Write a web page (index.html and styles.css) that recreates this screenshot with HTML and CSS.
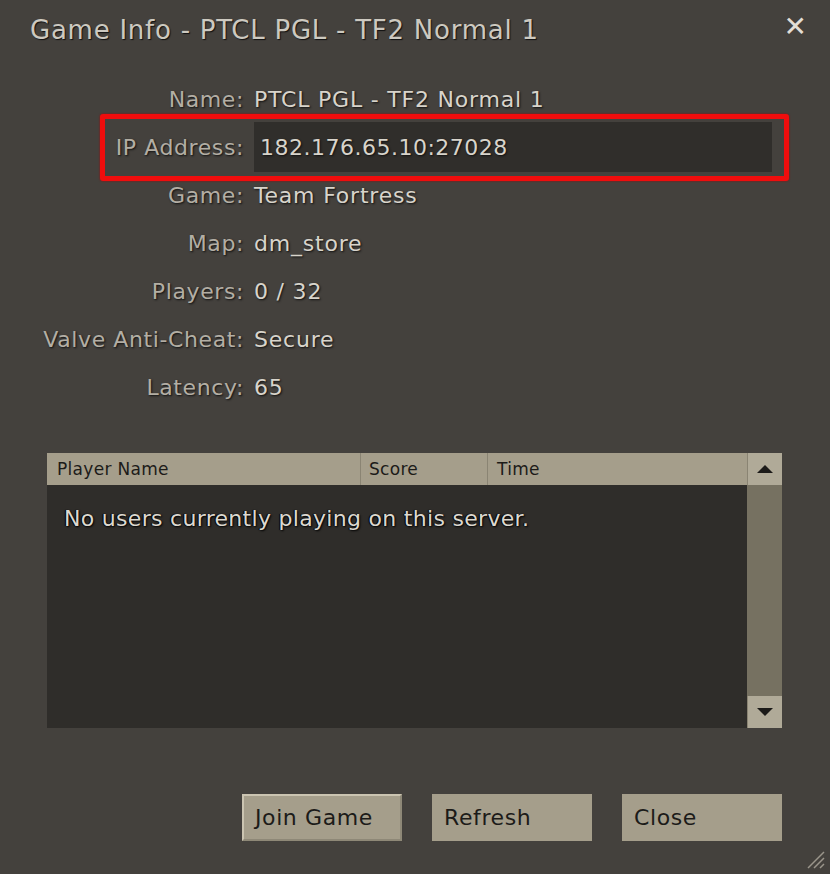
FILE: index.html
```html
<!DOCTYPE html>
<html lang="en">
<head>
    <meta charset="UTF-8">
    <title>Game Info - PTCL PGL - TF2 Normal 1</title>
    <link rel="stylesheet" href="styles.css">
</head>
<body>
    <div class="window">
        <div class="titlebar">
            <span class="title">Game Info - PTCL PGL - TF2 Normal 1</span>
            <span class="close-x">&#x2715;</span>
        </div>

        <div class="info">
            <div class="row"><span class="lbl">Name:</span><span class="val">PTCL PGL - TF2 Normal 1</span></div>
            <div class="row row-ip">
                <span class="lbl">IP Address:</span>
                <span class="field">182.176.65.10:27028</span>
                <span class="mark"></span>
            </div>
            <div class="row"><span class="lbl">Game:</span><span class="val">Team Fortress</span></div>
            <div class="row"><span class="lbl">Map:</span><span class="val">dm_store</span></div>
            <div class="row"><span class="lbl">Players:</span><span class="val">0 / 32</span></div>
            <div class="row"><span class="lbl">Valve Anti-Cheat:</span><span class="val">Secure</span></div>
            <div class="row"><span class="lbl">Latency:</span><span class="val">65</span></div>
        </div>

        <div class="players">
            <div class="list">
                <div class="head">
                    <div class="col c-name">Player Name</div>
                    <div class="col c-score">Score</div>
                    <div class="col c-time">Time</div>
                </div>
                <div class="body">No users currently playing on this server.</div>
            </div>
            <div class="scroll">
                <div class="sbtn"><span class="arrow up"></span></div>
                <div class="track"></div>
                <div class="sbtn"><span class="arrow down"></span></div>
            </div>
        </div>

        <div class="buttons">
            <button class="btn focused">Join Game</button>
            <button class="btn">Refresh</button>
            <button class="btn">Close</button>
        </div>

        <svg class="grip" width="24" height="24" viewBox="0 0 24 24">
            <path d="M22 6 L6 22 M22 12 L12 22 M22 18 L18 22" stroke="#9a958b" stroke-width="1.5"/>
        </svg>
    </div>
</body>
</html>
```

FILE: styles.css
```css
body { margin: 0; background: #423f3c; font-family: "DejaVu Sans", Verdana, sans-serif; }
.window { position: relative; width: 830px; height: 874px; background: #44413d; box-sizing: border-box; }

.titlebar { height: 64px; display: flex; align-items: center; justify-content: space-between; padding: 0 23px 4px 30px; box-sizing: border-box; }
.title { font-size: 26px; color: #cdc9c0; text-shadow: 1px 1px 1px #111; letter-spacing: 0.75px; }
.close-x { font-size: 28px; font-weight: bold; color: #e2ded6; margin-top: -8px; }

.info { padding-top: 11px; }
.row { position: relative; display: flex; align-items: center; height: 48px; font-size: 22px; letter-spacing: 0.8px; text-shadow: 1px 1px 2px #111; }
.lbl { width: 244px; text-align: right; color: #b3aea4; flex: none; letter-spacing: 0.6px; }
.val { padding-left: 10px; color: #d8d4cb; }
.field { margin-left: 10px; width: 518px; height: 50px; box-sizing: border-box; padding-left: 6px; display: flex; align-items: center; background: #302e2b; color: #d8d4cb; letter-spacing: 0.5px; }
.mark { position: absolute; left: 100px; top: -9px; width: 689px; height: 67px; border: 5px solid #f00d0d; border-radius: 3px; box-sizing: border-box; box-shadow: 0 0 2px #a00; }

.players { display: flex; margin: 42px 48px 0 47px; height: 275px; }
.list { flex: 1; display: flex; flex-direction: column; background: #2f2d2a; }
.head { display: flex; height: 32px; background: #a59e8b; }
.col { display: flex; align-items: center; padding-left: 10px; font-size: 17px; letter-spacing: 0.3px; color: #1c1b19; border-right: 1px solid #8a8473; box-sizing: border-box; }
.c-name { width: 314px; }
.c-score { width: 127px; padding-left: 8px; }
.c-time { flex: 1; padding-left: 9px; border-right: none; }
.body { padding: 21px 0 0 17px; font-size: 22px; letter-spacing: 0.3px; color: #ddd9d0; text-shadow: 1px 1px 2px #000, -1px 0 1px #000; }

.scroll { width: 35px; display: flex; flex-direction: column; }
.sbtn { height: 32px; background: #b0aa98; display: flex; align-items: center; justify-content: center; border-left: 1px solid #8a8473; }
.track { flex: 1; background: #767161; }
.arrow { width: 0; height: 0; border-left: 8px solid transparent; border-right: 8px solid transparent; }
.arrow.up { border-bottom: 8px solid #1c1b19; }
.arrow.down { border-top: 8px solid #1c1b19; }

.buttons { display: flex; gap: 30px; justify-content: flex-end; margin: 66px 48px 0 0; }
.btn { width: 160px; height: 47px; background: #a59e8b; border: 1px solid #a59e8b; text-align: left; padding: 0 0 0 11px; font-family: inherit; font-size: 22px; letter-spacing: 0.6px; color: #1c1b19; }
.btn.focused { border: 2px solid #cbc4b1; border-right-color: #8e8877; border-bottom-color: #8e8877; }
.grip { position: absolute; right: 4px; bottom: 4px; }
```
